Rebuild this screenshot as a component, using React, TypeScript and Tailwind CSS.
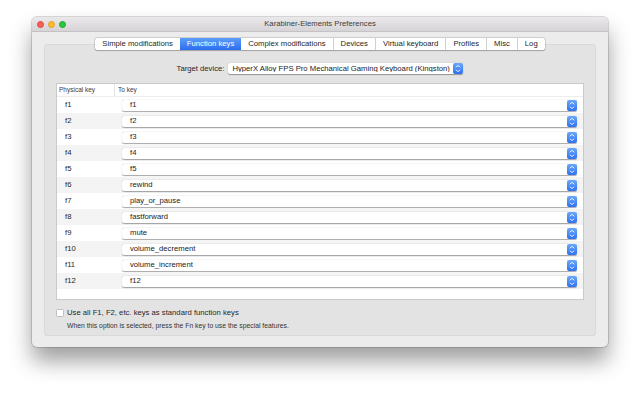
import React from "react";

const font = { fontFamily: '"Liberation Sans", Arial, sans-serif' };

const tabs = [
  "Simple modifications",
  "Function keys",
  "Complex modifications",
  "Devices",
  "Virtual keyboard",
  "Profiles",
  "Misc",
  "Log",
];

const rows = [
  ["f1", "f1"],
  ["f2", "f2"],
  ["f3", "f3"],
  ["f4", "f4"],
  ["f5", "f5"],
  ["f6", "rewind"],
  ["f7", "play_or_pause"],
  ["f8", "fastforward"],
  ["f9", "mute"],
  ["f10", "volume_decrement"],
  ["f11", "volume_increment"],
  ["f12", "f12"],
];

function Stepper() {
  return (
    <div className="w-[10px] h-[11px] rounded-[2px] bg-gradient-to-b from-[#6aa8fb] to-[#2f6ff0] flex items-center justify-center shrink-0">
      <svg width="6" height="9" viewBox="0 0 6 9" fill="none">
        <path d="M1 3.3 L3 1.3 L5 3.3" stroke="white" strokeWidth="1" />
        <path d="M1 5.7 L3 7.7 L5 5.7" stroke="white" strokeWidth="1" />
      </svg>
    </div>
  );
}

function Popup({ label, className, pad }: { label: string; className?: string; pad?: string }) {
  return (
    <div
      className={`h-[11px] bg-white flex items-center rounded-[2px] shadow-[0_0.5px_1px_rgba(0,0,0,0.35)] ${className ?? ""}`}
    >
      <span className={`flex-1 ${pad ?? "pl-[8px]"} text-[7.7px] leading-none text-[#222] whitespace-nowrap overflow-hidden`}>
        {label}
      </span>
      <Stepper />
    </div>
  );
}

export default function App() {
  return (
    <div className="w-[640px] h-[394px] bg-white pl-[32px] pt-[17px]" style={font}>
      <div className="w-[576px] h-[330px] rounded-[5px] overflow-hidden bg-[#ececec] shadow-[0_14px_22px_rgba(0,0,0,0.38),0_0_0_1px_rgba(0,0,0,0.14)] flex flex-col">
        {/* title bar */}
        <div className="h-[15px] bg-gradient-to-b from-[#ebe9eb] to-[#d6d4d6] border-b border-[#c4c2c4] flex items-center relative shrink-0">
          <div className="flex items-center gap-[4px] pl-[5px] w-[40px]">
            <span className="w-[7px] h-[7px] rounded-full bg-[#fc5f57] border border-[#e1463f]" />
            <span className="w-[7px] h-[7px] rounded-full bg-[#fdbc2e] border border-[#dea123]" />
            <span className="w-[7px] h-[7px] rounded-full bg-[#28c840] border border-[#1aab29]" />
          </div>
          <div className="flex-1 text-center text-[7.7px] text-[#3c3c3c] pr-[40px]">
            Karabiner-Elements Preferences
          </div>
        </div>

        {/* body */}
        <div className="flex-1 px-[12px] pt-[6px] pb-[11px] flex flex-col">
          <div className="flex justify-center relative z-10 -mb-[6px]">
            <div className="flex h-[12px] bg-white rounded-[2px] shadow-[0_0_0_0.5px_rgba(0,0,0,0.22),0_0.5px_1px_rgba(0,0,0,0.2)] overflow-hidden">
              {tabs.map((t, i) => (
                <div
                  key={t}
                  className={`px-[7px] flex items-center text-[7.7px] leading-none whitespace-nowrap ${
                    i === 1
                      ? "bg-gradient-to-b from-[#5b9df8] to-[#2c6cf0] text-white"
                      : "text-[#262626]"
                  } ${i > 0 && i !== 1 && i !== 2 ? "border-l border-[#d0d0d0]" : ""}`}
                >
                  {t}
                </div>
              ))}
            </div>
          </div>

          <div className="flex-1 bg-[#e3e3e3] rounded-[3px] border border-[#d9d9d9] px-[11px] pt-[18px] flex flex-col">
            <div className="flex items-center justify-center h-[11px]">
              <span className="text-[7.7px] text-[#262626] mr-[4px]">Target device:</span>
              <Popup
                label="HyperX Alloy FPS Pro Mechanical Gaming Keyboard (Kingston)"
                className="w-[235px]"
                pad="pl-[4px]"
              />
            </div>

            <div className="mt-[9px] h-[217px] bg-white border border-[#cacaca] flex flex-col">
              <div className="h-[13px] flex items-center text-[6.5px] text-[#3a3a3a] border-b border-[#ededed] shrink-0">
                <div className="w-[58px] pl-[2px] h-full flex items-center border-r border-[#e3e3e3]">
                  Physical key
                </div>
                <div className="pl-[3px]">To key</div>
              </div>
              {rows.map(([k, v], i) => (
                <div
                  key={k}
                  className={`h-[16px] flex items-center shrink-0 ${i % 2 === 1 ? "bg-[#f4f4f4]" : "bg-white"}`}
                >
                  <div className="w-[65px] pl-[8px] text-[7.7px] text-[#262626]">{k}</div>
                  <Popup label={v} className="w-[455px]" />
                </div>
              ))}
            </div>

            <div className="mt-[7px] flex items-center">
              <span className="w-[8px] h-[8px] bg-white rounded-[1.5px] border border-[#bdbdbd] mr-[3px]" />
              <span className="text-[7.7px] text-[#262626]">
                Use all F1, F2, etc. keys as standard function keys
              </span>
            </div>
            <div className="pl-[11px] mt-[2px] text-[6.8px] text-[#333]">
              When this option is selected, press the Fn key to use the special features.
            </div>
          </div>
        </div>
      </div>
    </div>
  );
}
